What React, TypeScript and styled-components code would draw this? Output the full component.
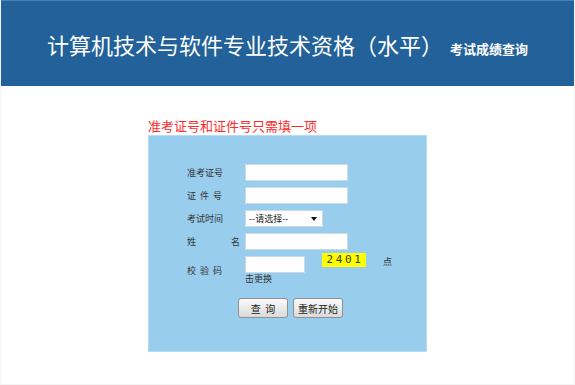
import React from "react";
import styled, { createGlobalStyle } from "styled-components";

const Global = createGlobalStyle`
  html, body { margin: 0; padding: 0; background: #fff; }
  body { font-family: "Noto Sans CJK SC", "Noto Sans", sans-serif; }
  * { box-sizing: border-box; }
`;

const Page = styled.div`
  width: 575px;
  height: 385px;
  border: 1px solid #f4f4f4;
  border-top: none;
  overflow: hidden;
`;

const Header = styled.header`
  height: 86px;
  margin: 0 -1px;
  background: #22619a;
  border-top: 1px solid #4a80b2;
  display: flex;
  align-items: center;
  justify-content: center;
`;

const TitleRow = styled.div`
  display: flex;
  align-items: baseline;
  gap: 7px;
  margin-top: 2px;
`;

const Title = styled.h1`
  margin: 0;
  font-size: 22px;
  line-height: 26px;
  font-weight: 400;
  color: #fff;
  white-space: nowrap;
`;

const Subtitle = styled.span`
  font-size: 13px;
  font-weight: 700;
  color: #fff;
  white-space: nowrap;
`;

const Main = styled.main`
  width: 279px;
  margin: 32px auto 0;
`;

const Notice = styled.div`
  color: #ff2a2a;
  font-size: 13px;
  line-height: 15px;
  margin-bottom: 2px;
  white-space: nowrap;
`;

const Panel = styled.section`
  height: 217px;
  background: #99cdee;
  border: 1px solid #b4dcf4;
  padding: 28px 0 0 38px;
`;

const Form = styled.div`
  display: grid;
  grid-template-columns: 58px auto;
  row-gap: 6px;
  align-items: center;
`;

const Label = styled.div<{ $spread?: boolean }>`
  font-size: 9px;
  line-height: 12px;
  color: #333;
  white-space: pre;
  ${(p) =>
    p.$spread
      ? `display: flex; justify-content: space-between; padding-right: 5px;`
      : ``}
`;

const TextInput = styled.input<{ $w?: number }>`
  width: ${(p) => p.$w ?? 103}px;
  height: 17px;
  margin: 0;
  padding: 0 3px;
  border: 1px solid #c9dbe7;
  background: #fff;
  font-size: 9px;
  outline: none;
  display: block;
`;

const SelectWrap = styled.div`
  position: relative;
  width: 78px;
  height: 17px;
`;

const Select = styled.select`
  appearance: none;
  -webkit-appearance: none;
  width: 78px;
  height: 17px;
  margin: 0;
  padding: 0 0 0 3px;
  border: 1px solid #c9dbe7;
  border-radius: 0;
  background: #fff;
  font-family: "Noto Sans CJK SC", sans-serif;
  font-size: 9px;
  color: #222;
  display: block;
`;

const Arrow = styled.svg`
  position: absolute;
  right: 6px;
  top: 7px;
  pointer-events: none;
`;

const CaptchaCell = styled.div`
  display: flex;
  flex-direction: column;
`;

const CaptchaLine = styled.div`
  display: flex;
  align-items: flex-start;
`;

const CaptchaImg = styled.div`
  margin: -3px 0 0 17px;
  width: 44px;
  height: 14px;
  background: #ffff00;
  font-family: "DejaVu Sans Mono", "Liberation Mono", monospace;
  font-size: 11px;
  line-height: 14px;
  letter-spacing: 2.6px;
  color: #3a3a1a;
  text-align: center;
  padding-left: 2px;
`;

const Small = styled.span<{ $ml?: number }>`
  font-size: 9px;
  line-height: 12px;
  color: #333;
  margin-left: ${(p) => p.$ml ?? 0}px;
`;

const ClickLine = styled.div`
  font-size: 9px;
  line-height: 12px;
  color: #333;
`;

const ButtonRow = styled.div`
  display: flex;
  gap: 5px;
  margin: 13px 0 0 51px;
`;

const Button = styled.button`
  width: 50px;
  height: 20px;
  margin: 0;
  padding: 0;
  border: 1px solid #8f8f8f;
  border-radius: 3px;
  background: linear-gradient(#fbfbfb, #dadada);
  font-family: "Noto Sans CJK SC", sans-serif;
  font-size: 10px;
  color: #222;
  white-space: pre;
`;

export default function App() {
  return (
    <>
      <Global />
      <Page>
        <Header>
          <TitleRow>
            <Title>计算机技术与软件专业技术资格（水平）</Title>
            <Subtitle>考试成绩查询</Subtitle>
          </TitleRow>
        </Header>
        <Main>
          <Notice>准考证号和证件号只需填一项</Notice>
          <Panel>
            <Form>
              <Label>准考证号</Label>
              <TextInput />
              <Label>{"证  件  号"}</Label>
              <TextInput />
              <Label>考试时间</Label>
              <SelectWrap>
                <Select defaultValue="">
                  <option value="">--请选择--</option>
                </Select>
                <Arrow width="6" height="4" viewBox="0 0 6 4">
                  <path d="M0 0h6L3 4z" fill="#111" />
                </Arrow>
              </SelectWrap>
              <Label $spread>
                <span>姓</span>
                <span>名</span>
              </Label>
              <TextInput />
              <Label>{"校  验  码"}</Label>
              <CaptchaCell>
                <CaptchaLine>
                  <TextInput $w={60} />
                  <CaptchaImg>2401</CaptchaImg>
                  <Small $ml={17}>点</Small>
                </CaptchaLine>
                <ClickLine>击更换</ClickLine>
              </CaptchaCell>
            </Form>
            <ButtonRow>
              <Button>{"查  询"}</Button>
              <Button>重新开始</Button>
            </ButtonRow>
          </Panel>
        </Main>
      </Page>
    </>
  );
}
